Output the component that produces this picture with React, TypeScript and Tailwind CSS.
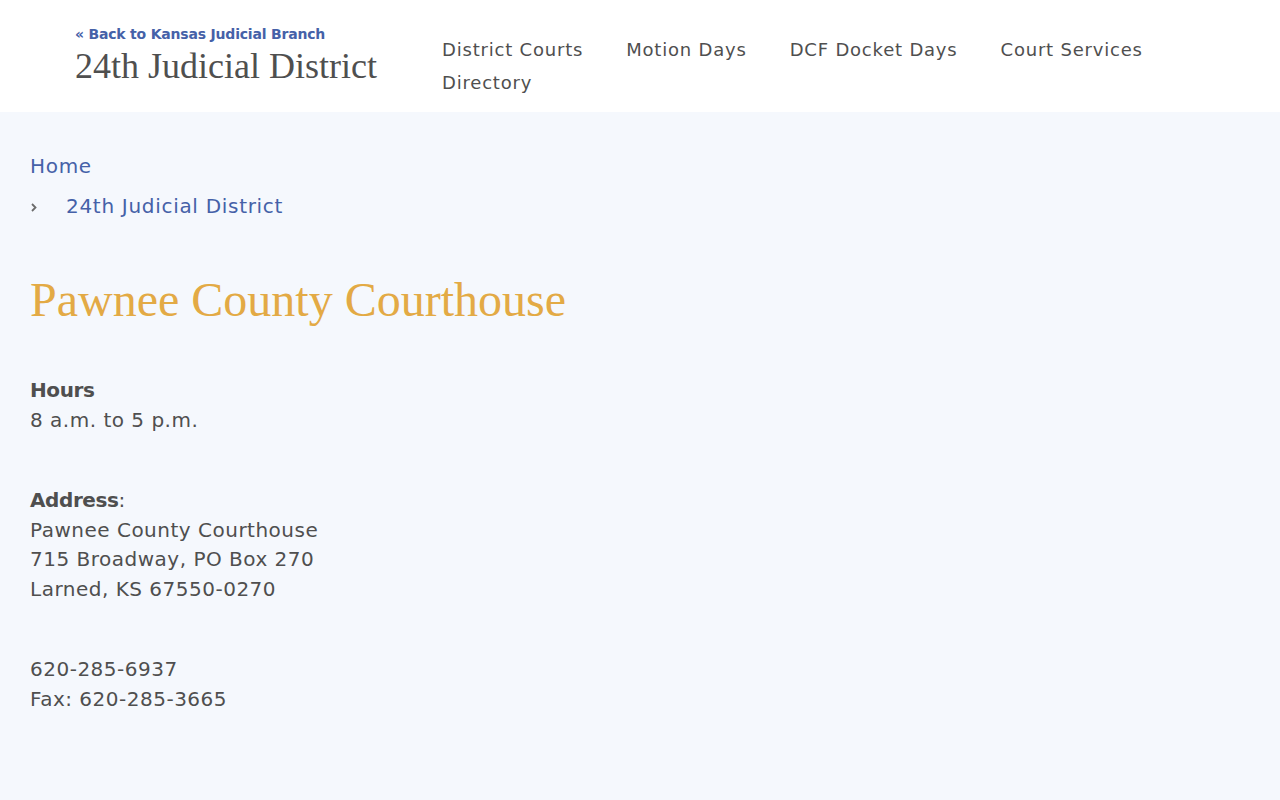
import React from "react";

const sans = { fontFamily: '"DejaVu Sans", "Open Sans", sans-serif' };

const navItems = ["District Courts", "Motion Days", "DCF Docket Days", "Court Services", "Directory"];

export default function App() {
  return (
    <div className="min-h-[800px] bg-[#f5f8fd] text-[#4f4f4f]" style={sans}>
      {/* Header */}
      <header className="h-[112px] bg-white flex items-start">
        <div className="pl-[75px] pt-[26px] w-[442px] shrink-0">
          <a href="#" className="block text-[14px] font-bold leading-[16px] text-[#4561a8] tracking-[-0.2px]">
            « Back to Kansas Judicial Branch
          </a>
          <div
            className="text-[36px] leading-[38px] text-[#4f4f4f] mt-[5px]"
            style={{ fontFamily: '"Liberation Serif", serif' }}
          >
            24th Judicial District
          </div>
        </div>
        <nav className="pt-[33px] w-[720px] flex flex-wrap gap-x-[43px] text-[18px] leading-[33px] tracking-[0.8px] text-[#4f4f4f]">
          {navItems.map((n) => (
            <a key={n} href="#" className="whitespace-nowrap">
              {n}
            </a>
          ))}
        </nav>
      </header>

      {/* Main */}
      <main className="px-[30px] pt-[40px]">
        <nav className="text-[20px] text-[#4561a8] leading-[28px] tracking-[0.7px]">
          <a href="#" className="block">Home</a>
          <div className="flex items-center mt-[12px]">
            <span className="w-[36px] flex items-center">
              <svg width="6" height="9" viewBox="0 0 6 9" className="ml-[1px] mt-[2px]">
                <path d="M1 1l3.5 3.5L1 8" fill="none" stroke="#6b6b6b" strokeWidth="1.8" />
              </svg>
            </span>
            <a href="#">24th Judicial District</a>
          </div>
        </nav>

        <h1
          className="mt-[52px] text-[48px] leading-[56px] text-[#e3aa45]"
          style={{ fontFamily: '"Liberation Serif", serif' }}
        >
          Pawnee County Courthouse
        </h1>

        <div className="mt-[48px] text-[20px] leading-[29.5px] tracking-[0.5px]">
          <p>
            <strong className="font-bold tracking-[-0.4px]">Hours</strong>
            <br />
            8 a.m. to 5 p.m.
          </p>
          <p className="mt-[51px]">
            <strong className="font-bold tracking-[-0.4px]">Address</strong>:
            <br />
            Pawnee County Courthouse
            <br />
            715 Broadway, PO Box 270
            <br />
            Larned, KS 67550-0270
          </p>
          <p className="mt-[51px]">
            620-285-6937
            <br />
            Fax: 620-285-3665
          </p>
        </div>
      </main>
    </div>
  );
}
